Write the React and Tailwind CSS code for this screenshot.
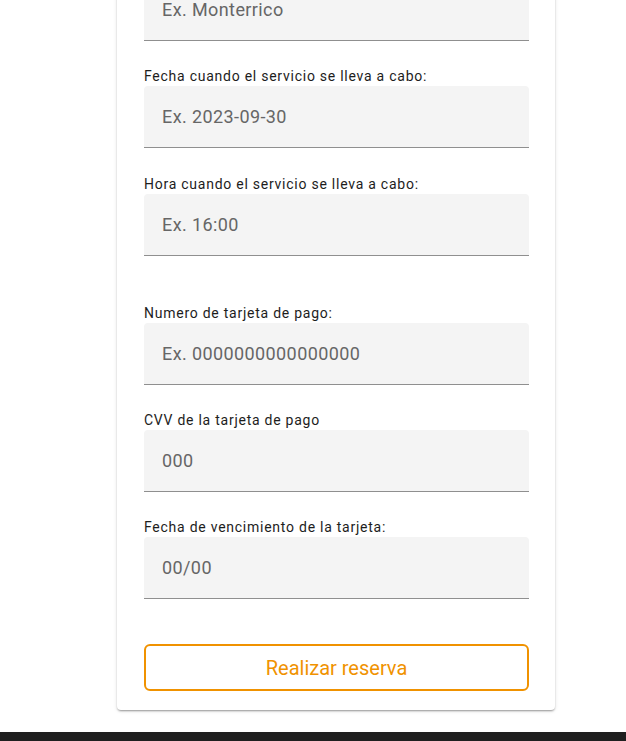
const fields = [
  { label: 'Fecha cuando el servicio se lleva a cabo:', placeholder: 'Ex. 2023-09-30', gap: 'mt-[25px]' },
  { label: 'Hora cuando el servicio se lleva a cabo:', placeholder: 'Ex. 16:00', gap: 'mt-[26px]' },
]

const payment = [
  { label: 'Numero de tarjeta de pago:', placeholder: 'Ex. 0000000000000000', gap: 'mt-[47px]' },
  { label: 'CVV de la tarjeta de pago', placeholder: '000', gap: 'mt-[25px]' },
  { label: 'Fecha de vencimiento de la tarjeta:', placeholder: '00/00', gap: 'mt-[25px]' },
]

function FilledInput({ placeholder }) {
  return (
    <input
      type="text"
      placeholder={placeholder}
      className="box-border block h-[62px] w-full rounded-t-[4px] border-b border-[#8f8f8f] bg-[#f4f4f4] px-[18px] text-[18px] tracking-[0.4px] text-[#333] outline-none placeholder:text-[#666]"
    />
  )
}

function Field({ label, placeholder, gap }) {
  return (
    <div className={gap}>
      <label className="block h-5 text-[14px] leading-5 tracking-[0.75px] text-[#1d1d1d]">{label}</label>
      <FilledInput placeholder={placeholder} />
    </div>
  )
}

export default function App() {
  return (
    <div className="min-h-[741px] bg-white font-['Roboto','Liberation_Sans',sans-serif]">
      <div className="-mt-[21px] pl-[117px]">
        <div className="w-[438px] rounded-[4px] bg-white pb-[19px] pl-[27px] pr-[26px] shadow-[0_2px_2px_-1px_rgba(0,0,0,0.25),0_1px_2px_0_rgba(0,0,0,0.14),0_1px_4px_0_rgba(0,0,0,0.1)]">
          <FilledInput placeholder="Ex. Monterrico" />
          {fields.map((f) => (
            <Field key={f.label} {...f} />
          ))}
          {payment.map((f) => (
            <Field key={f.label} {...f} />
          ))}
          <button
            type="button"
            className="mt-[45px] h-[47px] w-full rounded-[6px] border-2 border-[#f09200] bg-white text-[20px] text-[#f09200]"
          >
            Realizar reserva
          </button>
        </div>
      </div>
      <footer className="mt-[22px] h-[80px] bg-[#1f1f1f]" />
    </div>
  )
}
